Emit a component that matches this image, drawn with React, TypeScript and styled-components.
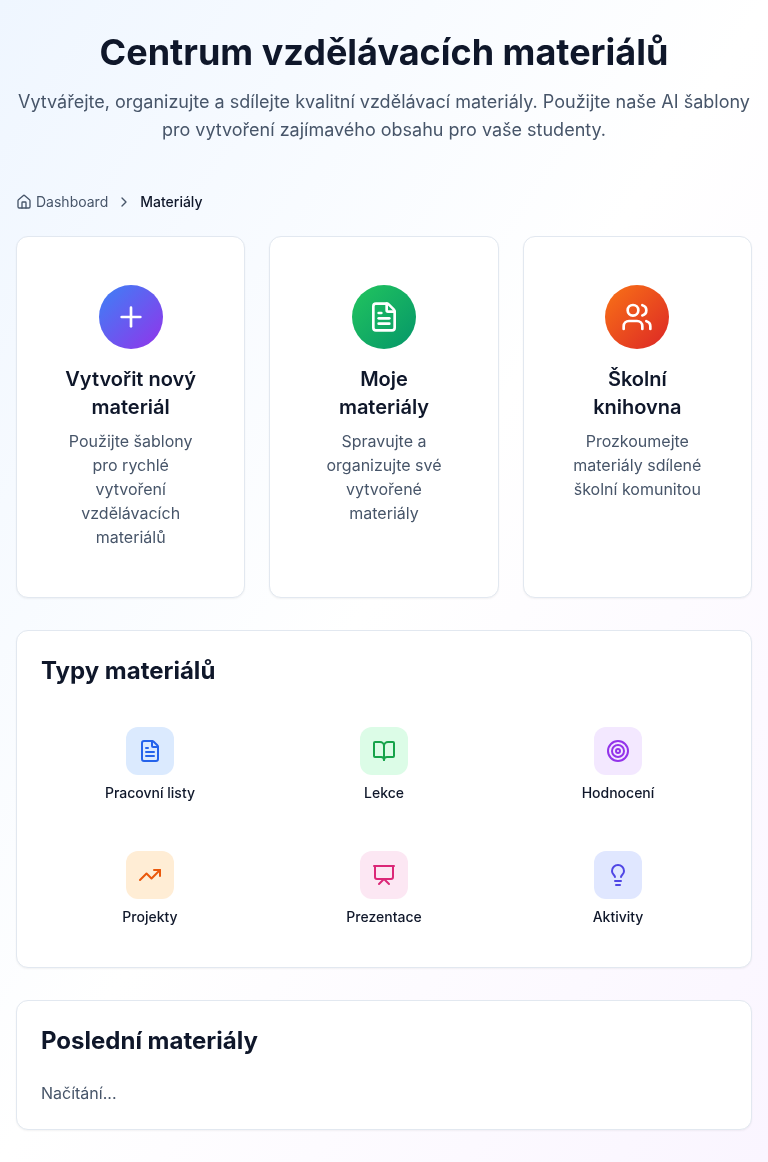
import React from 'react';
import styled, { createGlobalStyle } from 'styled-components';
import {
  House, ChevronRight, Plus, FileText, Users, BookOpen, Target, TrendingUp, Presentation, Lightbulb,
} from 'lucide-react';

const GlobalStyle = createGlobalStyle`
  *, *::before, *::after { box-sizing: border-box; }
  body {
    margin: 0;
    font-family: Inter, sans-serif;
    line-height: 1.5;
    color: #0f172a;
    -webkit-font-smoothing: antialiased;
  }
  h1, h2, h3, p { margin: 0; }
  svg { display: block; flex-shrink: 0; }
`;

const Page = styled.div`
  min-height: 100vh;
  padding: 32px 16px;
  background: linear-gradient(to bottom right, #eff6ff, #ffffff, #faf5ff);
  will-change: transform;
`;

const Header = styled.header`
  text-align: center;
  margin-bottom: 48px;
`;

const Title = styled.h1`
  font-size: 36px;
  line-height: 40px;
  font-weight: 700;
  margin-bottom: 16px;
`;

const Lead = styled.p`
  font-size: 18px;
  line-height: 28px;
  color: #475569;
`;

const Breadcrumb = styled.nav`
  display: flex;
  align-items: center;
  gap: 8px;
  font-size: 14px;
  line-height: 20px;
  color: #475569;
  margin-bottom: 24px;
`;

const CrumbLink = styled.span`
  display: flex;
  align-items: center;
  gap: 4px;
`;

const Current = styled.span`
  font-weight: 500;
  color: #0f172a;
`;

const Card = styled.section`
  background: #ffffff;
  border: 1px solid #e2e8f0;
  border-radius: 12px;
  box-shadow: 0 1px 2px rgba(0, 0, 0, 0.05);
`;

const ActionGrid = styled.div`
  display: grid;
  grid-template-columns: repeat(3, minmax(0, 1fr));
  gap: 24px;
  margin-bottom: 32px;
`;

const ActionCard = styled(Card)`
  padding: 48px;
  text-align: center;
`;

const Circle = styled.div<{ $from: string; $to: string }>`
  display: flex;
  align-items: center;
  justify-content: center;
  width: 64px;
  height: 64px;
  margin: 0 auto 16px;
  border-radius: 50%;
  color: #ffffff;
  background: linear-gradient(to bottom right, ${(p) => p.$from}, ${(p) => p.$to});
`;

const ActionTitle = styled.h3`
  font-size: 20px;
  line-height: 28px;
  font-weight: 600;
  margin-bottom: 8px;
`;

const ActionText = styled.p`
  font-size: 16px;
  line-height: 24px;
  color: #475569;
`;

const Panel = styled(Card)`
  padding: 24px;
  & + & { margin-top: 32px; }
`;

const PanelTitle = styled.h2`
  font-size: 24px;
  line-height: 32px;
  font-weight: 700;
  margin-bottom: 24px;
`;

const TypeGrid = styled.div`
  display: grid;
  grid-template-columns: repeat(3, minmax(0, 1fr));
  gap: 16px;
`;

const TypeItem = styled.div`
  display: flex;
  flex-direction: column;
  align-items: center;
  padding: 16px;
  font-size: 14px;
  line-height: 20px;
  font-weight: 500;
`;

const TypeIcon = styled.div<{ $bg: string; $fg: string }>`
  display: flex;
  align-items: center;
  justify-content: center;
  width: 48px;
  height: 48px;
  margin-bottom: 8px;
  border-radius: 12px;
  background: ${(p) => p.$bg};
  color: ${(p) => p.$fg};
`;

const Loading = styled.p`
  font-size: 16px;
  line-height: 24px;
  color: #475569;
`;

const actions = [
  { icon: Plus, from: '#3b82f6', to: '#9333ea', title: 'Vytvořit nový materiál', text: 'Použijte šablony pro rychlé vytvoření vzdělávacích materiálů' },
  { icon: FileText, from: '#22c55e', to: '#059669', title: 'Moje materiály', text: 'Spravujte a organizujte své vytvořené materiály' },
  { icon: Users, from: '#f97316', to: '#dc2626', title: 'Školní knihovna', text: 'Prozkoumejte materiály sdílené školní komunitou' },
];

const types = [
  { icon: FileText, bg: '#dbeafe', fg: '#2563eb', label: 'Pracovní listy' },
  { icon: BookOpen, bg: '#dcfce7', fg: '#16a34a', label: 'Lekce' },
  { icon: Target, bg: '#f3e8ff', fg: '#9333ea', label: 'Hodnocení' },
  { icon: TrendingUp, bg: '#ffedd5', fg: '#ea580c', label: 'Projekty' },
  { icon: Presentation, bg: '#fce7f3', fg: '#db2777', label: 'Prezentace' },
  { icon: Lightbulb, bg: '#e0e7ff', fg: '#4f46e5', label: 'Aktivity' },
];

export default function App() {
  return (
    <Page>
      <GlobalStyle />
      <Header>
        <Title>Centrum vzdělávacích materiálů</Title>
        <Lead>
          Vytvářejte, organizujte a sdílejte kvalitní vzdělávací materiály. Použijte naše AI šablony pro vytvoření
          zajímavého obsahu pro vaše studenty.
        </Lead>
      </Header>
      <Breadcrumb>
        <CrumbLink><House size={16} />Dashboard</CrumbLink>
        <ChevronRight size={16} />
        <Current>Materiály</Current>
      </Breadcrumb>
      <ActionGrid>
        {actions.map(({ icon: Icon, ...a }) => (
          <ActionCard key={a.title}>
            <Circle $from={a.from} $to={a.to}><Icon size={32} /></Circle>
            <ActionTitle>{a.title}</ActionTitle>
            <ActionText>{a.text}</ActionText>
          </ActionCard>
        ))}
      </ActionGrid>
      <Panel>
        <PanelTitle>Typy materiálů</PanelTitle>
        <TypeGrid>
          {types.map(({ icon: Icon, ...t }) => (
            <TypeItem key={t.label}>
              <TypeIcon $bg={t.bg} $fg={t.fg}><Icon size={24} /></TypeIcon>
              {t.label}
            </TypeItem>
          ))}
        </TypeGrid>
      </Panel>
      <Panel>
        <PanelTitle>Poslední materiály</PanelTitle>
        <Loading>Načítání...</Loading>
      </Panel>
    </Page>
  );
}
